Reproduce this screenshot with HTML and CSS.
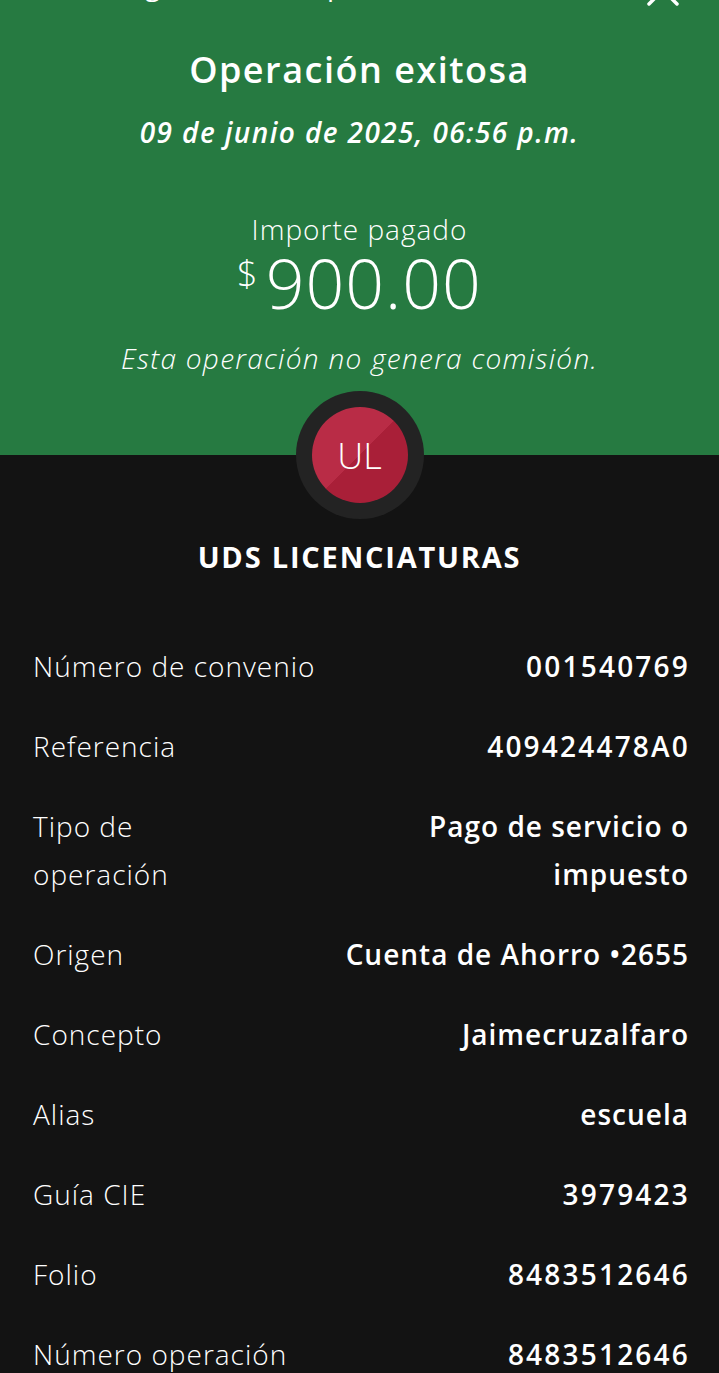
FILE: index.html
```html
<!DOCTYPE html>
<html lang="es">
<head>
  <meta charset="UTF-8" />
  <title>Operación exitosa</title>
  <link rel="stylesheet" href="styles.css">
</head>
<body>
<div class="hero">
  <div class="topbar">
    <span class="topbar-title">Registro de la operación</span>
    <span class="close">
      <svg width="36" height="36" viewBox="0 0 36 36"><path d="M4 4 L32 32 M32 4 L4 32" stroke="#fff" stroke-width="3.5" stroke-linecap="round" fill="none"/></svg>
    </span>
  </div>
  <h1>Operación exitosa</h1>
  <p class="date">09 de junio de 2025, 06:56 p.m.</p>
  <p class="amount-label">Importe pagado</p>
  <p class="amount"><span class="currency">$</span>900.00</p>
  <p class="note">Esta operación no genera comisión.</p>
</div>

<div class="avatar-wrap">
  <div class="avatar"><span>UL</span></div>
</div>
<h2 class="company">UDS LICENCIATURAS</h2>

<div class="details">
  <div class="row"><span class="label">Número de convenio</span><span class="value num">001540769</span></div>
  <div class="row"><span class="label">Referencia</span><span class="value num">409424478A0</span></div>
  <div class="row"><span class="label">Tipo de<br>operación</span><span class="value">Pago de servicio o<br>impuesto</span></div>
  <div class="row"><span class="label">Origen</span><span class="value">Cuenta de Ahorro •2655</span></div>
  <div class="row"><span class="label">Concepto</span><span class="value">Jaimecruzalfaro</span></div>
  <div class="row"><span class="label">Alias</span><span class="value">escuela</span></div>
  <div class="row"><span class="label">Guía CIE</span><span class="value num">3979423</span></div>
  <div class="row"><span class="label">Folio</span><span class="value num">8483512646</span></div>
  <div class="row"><span class="label">Número operación</span><span class="value num">8483512646</span></div>
</div>
</body>
</html>
```

FILE: styles.css
```css
* {
  margin: 0;
  padding: 0;
  box-sizing: border-box;
}
html {
  background: #131313;
}
body {
  color: #fff;
  font-family: "Open Sans", "Liberation Sans", sans-serif;
  overflow: hidden;
}
.hero {
  background: #267a41;
  text-align: center;
  padding-bottom: 80px;
}
/* header scrolled almost out of view */
.topbar {
  height: 40px;
  margin-top: -36px;
  position: relative;
  font-size: 28px;
  line-height: 40px;
  text-align: left;
  padding-left: 110px;
}
.topbar-title {
  font-weight: 400;
  letter-spacing: 1px;
}
.close {
  position: absolute;
  right: 38px;
  top: 8px;
  line-height: 0;
}
h1 {
  font-size: 36px;
  font-weight: 600;
  line-height: 44px;
  margin-top: 44px;
  letter-spacing: 1.5px;
}
.date {
  font-size: 28px;
  font-style: italic;
  font-weight: 600;
  margin-top: 24px;
  line-height: 32px;
  letter-spacing: 1.4px;
}
.amount-label {
  font-size: 28px;
  font-weight: 300;
  margin-top: 71px;
  line-height: 20px;
  letter-spacing: 1px;
}
.amount {
  font-size: 68px;
  font-weight: 300;
  line-height: 70px;
  letter-spacing: 1px;
}
.currency {
  font-size: 36px;
  vertical-align: 22px;
  margin-right: 8px;
  letter-spacing: 0;
}
.note {
  font-size: 28px;
  font-style: italic;
  font-weight: 300;
  margin-top: 23px;
  line-height: 34px;
  letter-spacing: 1.3px;
}
.avatar-wrap {
  display: flex;
  justify-content: center;
  margin-top: -64px;
}
.avatar {
  width: 128px;
  height: 128px;
  border-radius: 50%;
  background: #232323;
  display: flex;
  align-items: center;
  justify-content: center;
}
.avatar span {
  width: 96px;
  height: 96px;
  border-radius: 50%;
  background: linear-gradient(135deg, #b92c46 50%, #a91f38 50%);
  display: flex;
  align-items: center;
  justify-content: center;
  font-size: 36px;
  font-weight: 300;
}
.company {
  text-align: center;
  font-size: 29px;
  font-weight: 700;
  margin-top: 20px;
  line-height: 36px;
  letter-spacing: 1.8px;
}
.details {
  padding: 51px 31px 0 33px;
}
.row {
  display: flex;
  justify-content: space-between;
  align-items: flex-start;
  padding: 16px 0;
  font-size: 28px;
  line-height: 48px;
}
.label {
  font-weight: 300;
  letter-spacing: 1px;
}
.value {
  font-weight: 600;
  text-align: right;
  letter-spacing: 1px;
  margin-right: -1px;
}
.value.num {
  letter-spacing: 2.2px;
  margin-right: -2px;
}
```
